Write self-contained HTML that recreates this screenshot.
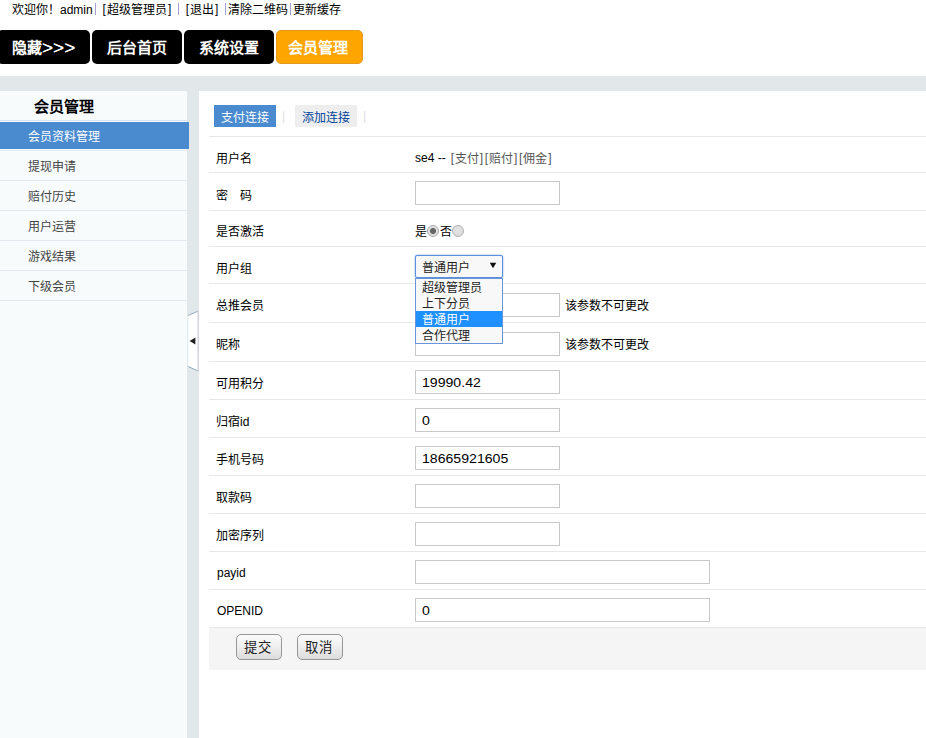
<!DOCTYPE html>
<html lang="zh-CN">
<head>
<meta charset="utf-8">
<title>会员管理</title>
<style>
*{box-sizing:border-box;margin:0;padding:0}
html,body{width:926px;height:738px;overflow:hidden;background:#fff}
body{position:relative;font-family:"Liberation Sans",sans-serif;font-size:12px;color:#000;line-height:1}
.abs{position:absolute;white-space:nowrap}
.j{display:inline-block;white-space:nowrap;text-align:justify;text-align-last:justify;vertical-align:baseline}
/* top line */
#top span{position:absolute;top:4px;height:12px;line-height:12px;font-size:12px;white-space:nowrap;color:#000}
#top .bar{position:absolute;top:3px;width:1px;height:12px;background:#a4a0d6}
/* nav */
.nav{position:absolute;top:30px;height:34px;border-radius:5px;background:#000;color:#fff;font-weight:bold;font-size:15px;line-height:34px;white-space:nowrap;overflow:hidden}
.nav b{position:absolute;top:1px;font-weight:bold}
.nav.on{background:#ffa500;border:1px solid #e29a1c;line-height:32px}
/* page bg */
#bg{position:absolute;left:0;top:76px;width:926px;height:662px;background:#e2e8ea}
#side{position:absolute;left:0;top:91px;width:187px;height:647px;background:#f7fbfc}
.mi{position:absolute;left:0;width:187px;height:30px;border-top:1px solid #e3e9ee;font-size:12px;color:#444;line-height:32px;padding-left:28px;white-space:nowrap}
.mi.on{left:0;width:189px;height:27px;background:#4a8bd0;color:#fff;border:0;line-height:31px}
#main{position:absolute;left:199px;top:91px;width:727px;height:647px;background:#fff}
.tab{position:absolute;top:105px;height:22px;width:62px;line-height:26px;overflow:hidden;text-align:center;font-size:12px;white-space:nowrap}
.row{position:absolute;left:209px;width:717px;height:1px;background:#e8e8e8}
.lb{position:absolute;left:216px;font-size:12px;line-height:16px;color:#000;white-space:nowrap}
.lb.k{color:#555}.lb u{display:inline-block;width:5.1px;text-align:center;text-decoration:none;position:relative;top:-1.5px}
.in{position:absolute;left:415px;width:145px;height:24px;border:1px solid #c8c8c8;background:#fff;font-size:12px;line-height:22px;padding-left:5.5px;white-space:nowrap;overflow:hidden}
.in.w{width:295px}
.in i{display:inline-block;font-style:normal;transform:scaleX(1.175);transform-origin:0 50%;position:relative;top:1px}
.btn{position:absolute;top:634px;width:46px;height:26px;border:1px solid #979797;border-radius:5px;background:linear-gradient(#fbfbfb,#f0f0f0 45%,#dcdcdc);font-size:13.33px;line-height:26px;text-align:left;color:#222;letter-spacing:0.3px;padding-left:7.3px;overflow:hidden;white-space:nowrap}
.opt{position:absolute;left:0;width:86px;height:16px;line-height:18px;padding-left:6px;overflow:hidden;font-size:12px;color:#222;white-space:nowrap}
</style>
</head>
<body>
<div id="top">
<span style="left:12px;width:48px;text-align:justify;text-align-last:justify">欢迎你！</span><span style="left:60px">admin</span><i class="bar" style="left:95px"></i><span style="left:102.5px;top:2.5px">[</span><span style="left:107px;width:60px;text-align:justify;text-align-last:justify">超级管理员</span><span style="left:168px;top:2.5px">]</span><i class="bar" style="left:178px"></i><span style="left:185.7px;top:2.5px">[</span><span style="left:190px;width:24px;text-align:justify;text-align-last:justify">退出</span><span style="left:215px;top:2.5px">]</span><i class="bar" style="left:225px"></i><span style="left:228px;width:60px;text-align:justify;text-align-last:justify">清除二维码</span><i class="bar" style="left:290px"></i><span style="left:293px;width:48px;text-align:justify;text-align-last:justify">更新缓存</span>
</div>

<div class="nav" style="left:-3px;width:93px"><b style="left:15px;width:30px;text-align:justify;text-align-last:justify">隐藏</b><b style="left:45px;top:1px;font-size:19px;font-weight:normal;letter-spacing:0;text-shadow:0 0 0.6px #fff">&gt;&gt;&gt;</b></div>
<div class="nav" style="left:92px;width:90px"><b style="left:15px;width:60px;text-align:justify;text-align-last:justify">后台首页</b></div>
<div class="nav" style="left:184px;width:90px"><b style="left:15px;width:60px;text-align:justify;text-align-last:justify">系统设置</b></div>
<div class="nav on" style="left:276px;width:87px"><b style="left:11px;width:60px;text-align:justify;text-align-last:justify">会员管理</b></div>

<div id="bg"></div>
<div id="side"></div>
<div id="sidemenu">
<h3 id="sh" style="position:absolute;left:34px;top:99px;font-size:15px;line-height:16px;font-weight:bold;white-space:nowrap;width:60px;text-align:justify;text-align-last:justify">会员管理</h3>
<div class="mi" style="top:120px;height:2px;padding:0;width:189px;border-top-color:#d9e2ee"></div>
<div class="mi on" style="top:122px"><span class="j" style="width:72px">会员资料管理</span></div>
<div class="mi" style="top:150px"><span class="j" style="width:48px">提现申请</span></div>
<div class="mi" style="top:180px"><span class="j" style="width:48px">赔付历史</span></div>
<div class="mi" style="top:210px"><span class="j" style="width:48px">用户运营</span></div>
<div class="mi" style="top:240px"><span class="j" style="width:48px">游戏结果</span></div>
<div class="mi" style="top:270px"><span class="j" style="width:48px">下级会员</span></div>
<div class="mi" style="top:300px;height:1px;padding:0"></div>
</div>

<svg class="abs" style="left:187px;top:309px" width="13" height="64" viewBox="0 0 13 64">
<polygon points="0.9,6.5 11.4,2 11.4,62 0.9,57.5" fill="#fff"/>
<polyline points="0.9,6.5 11.4,2" fill="none" stroke="#8fa8ba" stroke-width="1"/>
<polyline points="0.9,57.5 11.4,62" fill="none" stroke="#8fa8ba" stroke-width="1"/>
<line x1="0.9" y1="6.5" x2="0.9" y2="57.5" stroke="#e4ecf0" stroke-width="1"/>
<line x1="11.2" y1="2" x2="11.2" y2="62" stroke="#d2d2de" stroke-width="1.4"/>
<polygon points="2.6,32 8.4,28.6 8.4,35.4" fill="#222"/>
</svg>

<div id="main"></div>

<div class="tab" style="left:214px;background:#4a8bd0;color:#fff"><span class="j" style="width:48px">支付连接</span></div>
<span class="abs" style="left:282px;top:110px;color:#ddd;font-size:12px;line-height:12px">|</span>
<div class="tab" style="left:295px;background:#eee;color:#004499"><span class="j" style="width:48px">添加连接</span></div>
<span class="abs" style="left:363px;top:110px;color:#ddd;font-size:12px;line-height:12px">|</span>

<div class="row" style="top:136px"></div>
<div class="row" style="top:172px"></div>
<div class="row" style="top:210px"></div>
<div class="row" style="top:246px"></div>
<div class="row" style="top:283px"></div>
<div class="row" style="top:322px"></div>
<div class="row" style="top:361px"></div>
<div class="row" style="top:399px"></div>
<div class="row" style="top:437px"></div>
<div class="row" style="top:475px"></div>
<div class="row" style="top:513px"></div>
<div class="row" style="top:551px"></div>
<div class="row" style="top:589px"></div>
<div class="abs" style="left:209px;top:627px;width:717px;height:43px;background:#f5f5f5;border-top:1px solid #e8e8e8"></div>

<div class="lb" style="top:151px"><span class="j" style="width:36px">用户名</span></div>
<div class="lb" style="top:188px"><span class="j" style="width:36px">密　码</span></div>
<div class="lb" style="top:224px"><span class="j" style="width:48px">是否激活</span></div>
<div class="lb" style="top:261px"><span class="j" style="width:36px">用户组</span></div>
<div class="lb" style="top:298px"><span class="j" style="width:48px">总推会员</span></div>
<div class="lb" style="top:337px"><span class="j" style="width:24px">昵称</span></div>
<div class="lb" style="top:376px"><span class="j" style="width:48px">可用积分</span></div>
<div class="lb" style="top:414px"><span class="j" style="width:24px">归宿</span>id</div>
<div class="lb" style="top:452px"><span class="j" style="width:48px">手机号码</span></div>
<div class="lb" style="top:490px"><span class="j" style="width:36px">取款码</span></div>
<div class="lb" style="top:528px"><span class="j" style="width:48px">加密序列</span></div>
<div class="lb" style="left:217px;top:565px">payid</div>
<div class="lb" style="left:217px;top:603px">OPENID</div>

<div class="lb" style="left:415px;top:150px">se4 -- </div><div class="lb k" style="left:449.8px;top:151px"><u>[</u><span class="j" style="width:24px">支付</span><u>]</u><u>[</u><span class="j" style="width:24px">赔付</span><u>]</u><u>[</u><span class="j" style="width:24px">佣金</span><u>]</u></div>

<div class="in" style="top:181px"></div>

<div class="lb" style="left:415px;top:224px">是</div>
<div class="abs" style="left:427px;top:225px;width:12px;height:12px;border-radius:50%;border:1px solid #a9a9a9;background:radial-gradient(circle at 50% 50%,#666 0,#666 2.6px,#dedede 3.4px,#ececec 100%)"></div>
<div class="lb" style="left:440px;top:224px">否</div>
<div class="abs" style="left:452px;top:225px;width:12px;height:12px;border-radius:50%;border:1px solid #b4b4b4;background:radial-gradient(circle at 50% 45%,#e6e6e6,#d6d6d6)"></div>

<div class="in" style="top:293px"></div>
<div class="lb" style="left:565px;top:298px"><span class="j" style="width:84px">该参数不可更改</span></div>
<div class="in" style="top:332px"></div>
<div class="lb" style="left:565px;top:337px"><span class="j" style="width:84px">该参数不可更改</span></div>
<div class="in" style="top:370px"><i>19990.42</i></div>
<div class="in" style="top:408px"><i>0</i></div>
<div class="in" style="top:446px"><i>18665921605</i></div>
<div class="in" style="top:484px"></div>
<div class="in" style="top:522px"></div>
<div class="in w" style="top:560px"></div>
<div class="in w" style="top:598px"><i>0</i></div>

<!-- select + dropdown -->
<div class="abs" style="left:415px;top:255px;width:88px;height:23px;border:1px solid #5b8fdc;border-radius:2px;background:#f8f8f8;box-shadow:0 0 2px #7aa6e6;font-size:12px;line-height:25px;padding-left:6px;color:#222;overflow:hidden"><span class="j" style="width:48px">普通用户</span></div>
<svg class="abs" style="left:489px;top:262px" width="8" height="7" viewBox="0 0 8 7"><polygon points="0.8,0.8 7.2,0.8 4,6.2" fill="#111"/></svg>
<div class="abs" style="left:415px;top:278px;width:88px;height:66px;border:1px solid #6a94d9;background:#f8f8f8">
<div class="opt" style="top:0"><span class="j" style="width:60px">超级管理员</span></div>
<div class="opt" style="top:16px"><span class="j" style="width:48px">上下分员</span></div>
<div class="opt" style="top:32px;background:#1e90ff;color:#fff"><span class="j" style="width:48px">普通用户</span></div>
<div class="opt" style="top:48px"><span class="j" style="width:48px">合作代理</span></div>
</div>

<div class="btn" style="left:236px">提交</div>
<div class="btn" style="left:297px">取消</div>
</body>
</html>
